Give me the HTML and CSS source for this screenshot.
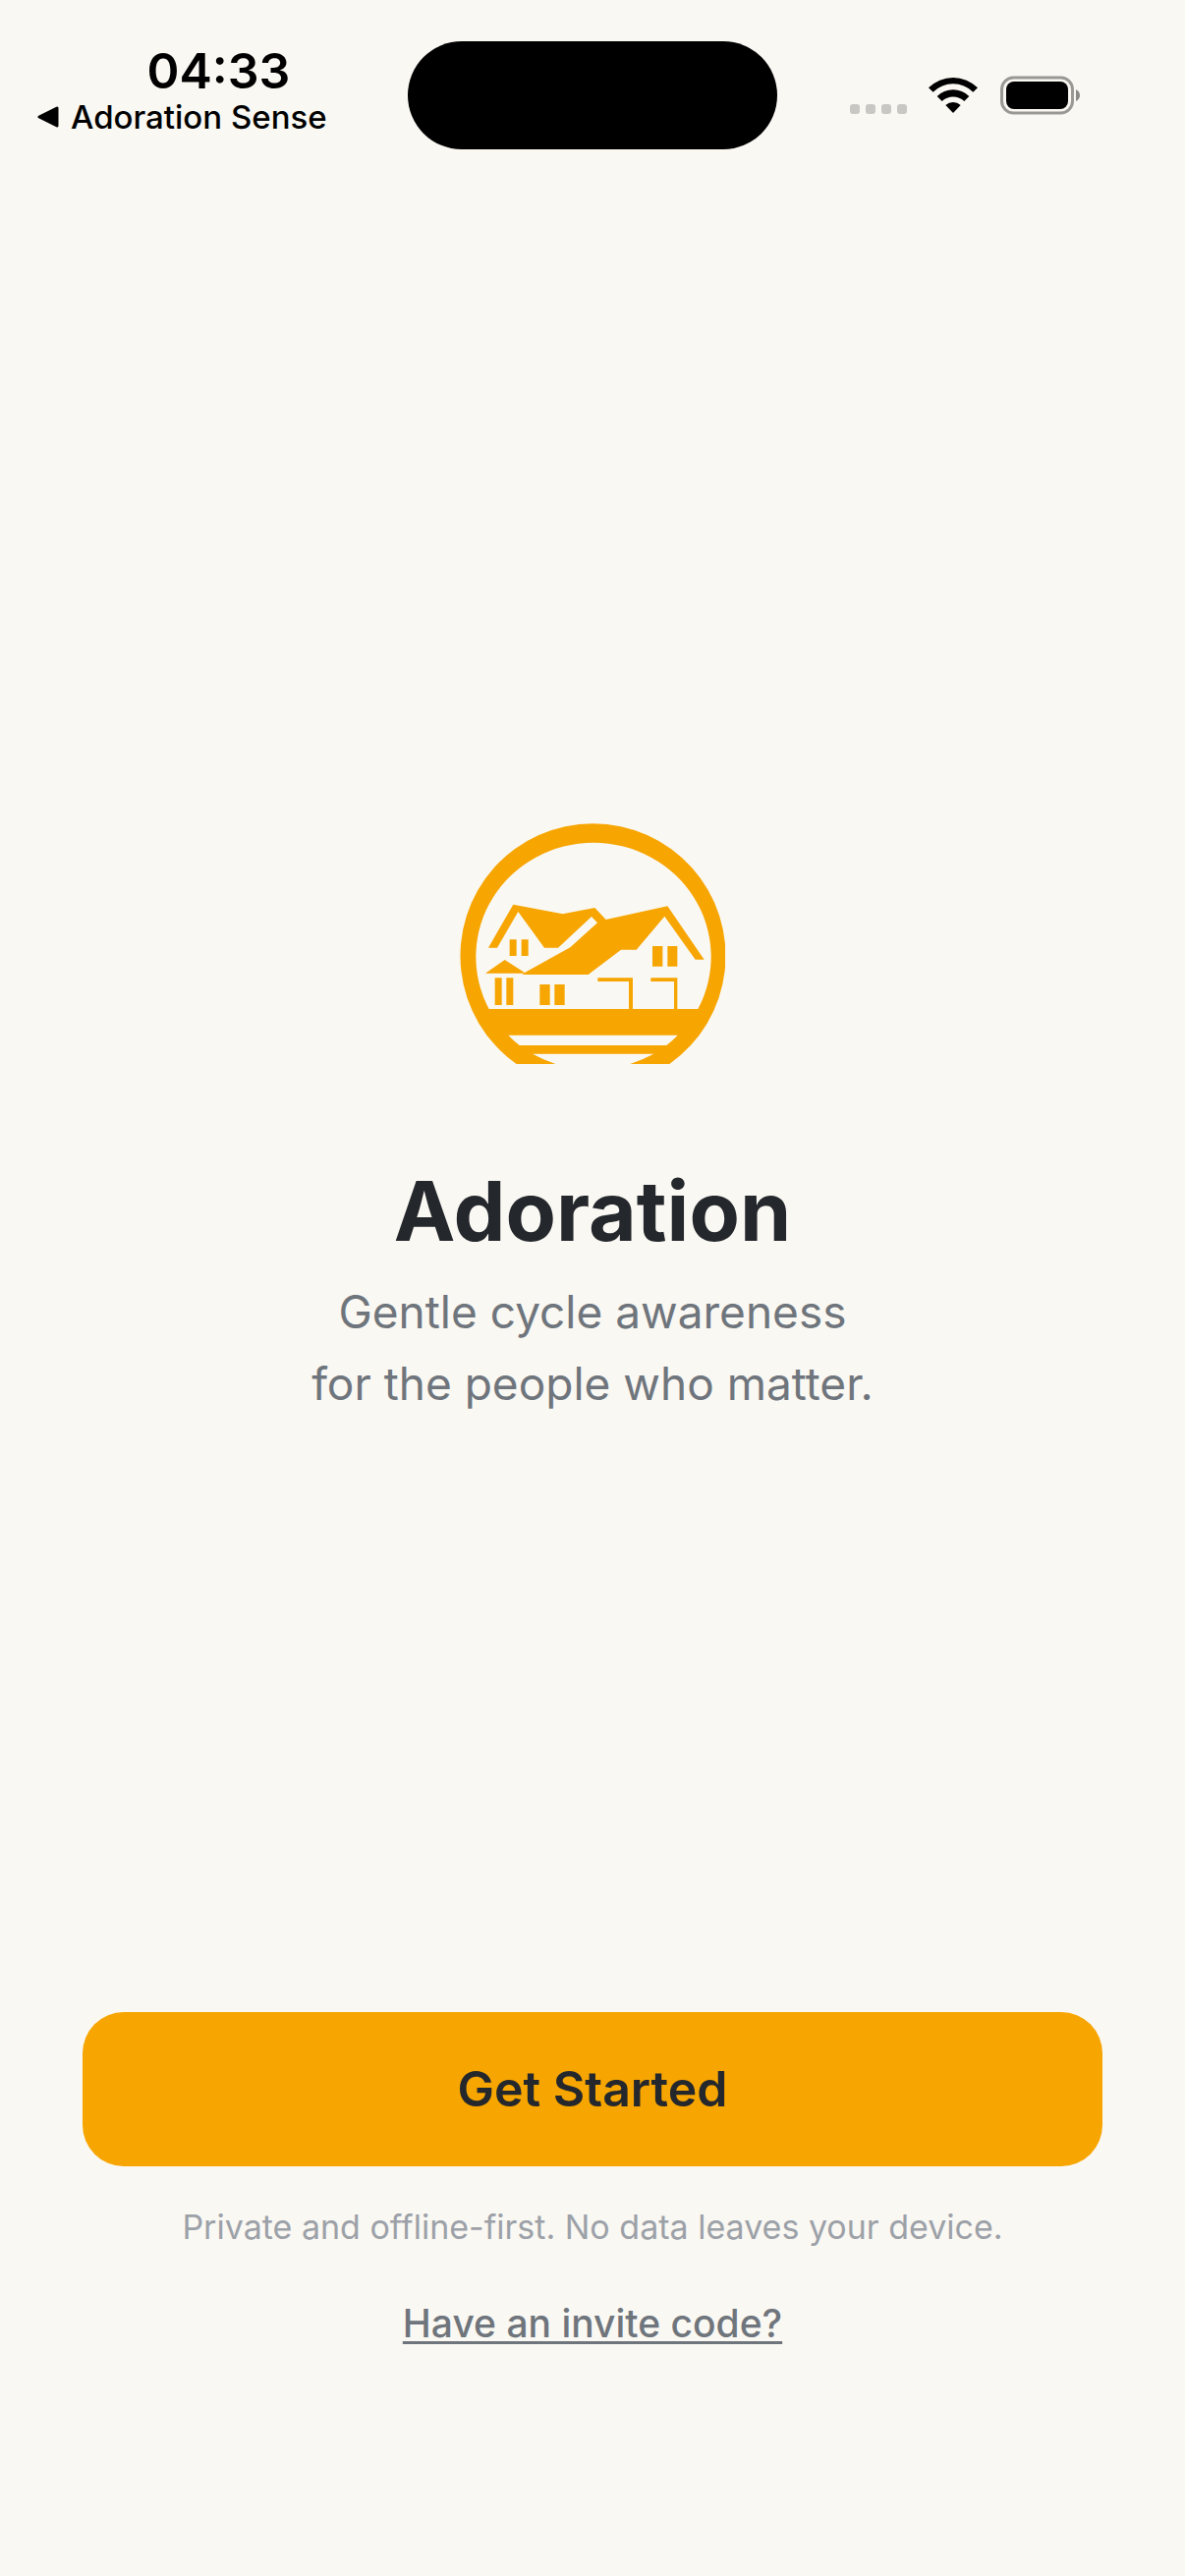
FILE: index.html
```html
<!DOCTYPE html>
<html lang="en">
<head>
    <meta charset="UTF-8">
    <meta name="viewport" content="width=device-width, initial-scale=1.0">
    <title>Adoration</title>
    <link rel="stylesheet" href="styles.css">
</head>
<body>

    <header class="status-bar">
        <div class="status-left">
            <span class="time">04:33</span>
            <a href="#" class="back">
                <svg width="22" height="22" viewBox="0 0 22 22" aria-hidden="true">
                    <path d="M20 2 V20 L2 11 Z" stroke="#000" stroke-width="3" stroke-linejoin="round"/>
                </svg>
                Adoration Sense
            </a>
        </div>
        <div class="island"></div>
        <div class="status-right">
            <svg class="signal" width="58" height="10" viewBox="0 0 58 10" fill="#c8c7c3" aria-hidden="true">
                <rect width="10" height="10" rx="3"/>
                <rect x="16" width="10" height="10" rx="3"/>
                <rect x="32" width="10" height="10" rx="3"/>
                <rect x="48" width="10" height="10" rx="3"/>
            </svg>
            <svg width="50" height="38" viewBox="0 0 150 114" aria-hidden="true">
                <path d="M0 34 A106 106 0 0 1 150 34 L136 47 A87 87 0 0 0 14 47 Z"/>
                <path d="M26 60 A70 70 0 0 1 124 60 L109 75 A49 49 0 0 0 41 75 Z"/>
                <path d="M52 87 A34 34 0 0 1 98 87 L75 111 Z"/>
            </svg>
            <svg width="82" height="40" viewBox="0 0 82 40" aria-hidden="true">
                <rect x="2.5" y="2" width="72" height="36" rx="12" fill="none" stroke="#999894" stroke-width="3"/>
                <rect x="7" y="6" width="63" height="28" rx="8"/>
                <path d="M78 14 Q82 16 82 20 Q82 24 78 26 Z" fill="#8b8a86"/>
            </svg>
        </div>
    </header>

    <main class="welcome">
        <svg class="logo" viewBox="38 36 810 735" fill="#f7a500" role="img" aria-label="Adoration logo">
            <!-- ring, cut flat at the bottom -->
            <path fill-rule="evenodd" d="M211 771 A405 404 0 1 1 678 771 H558 Q596 758 630 740 H260 Q293 758 330 771 Z
                M127 603 H765 A359 348 0 1 0 127 603 Z
                M186 683 Q202 700 220 714 H669 Q687 700 703 683 Z"/>
            <!-- roofs -->
            <path d="M201 284 L352 313 L450 294 L484 330 L672 289 L784 452 H757 L663 320 L577 422 H530 L430 498 H228 L236 492 L375 415 L458 340 L440 321 L338 416 H296 L216 306 L152 416 H125 Z"/>
            <path d="M175 453 L236 492 L230 494 H116 Z"/>
            <!-- windows -->
            <path d="M190 391 h21 v50 h-21 Z M226 391 h21 v50 h-21 Z"/>
            <path d="M145 508 h21 v83 h-21 Z M180 508 h21 v83 h-21 Z"/>
            <path d="M282 528 h31 v63 h-31 Z M327 528 h31 v63 h-31 Z"/>
            <path d="M626 411 h31 v62 h-31 Z M672 411 h30 v62 h-30 Z"/>
            <!-- garage -->
            <path d="M459 508 H566 V604 H554 V519 H459 Z M621 508 H702 V604 H692 V519 H621 Z"/>
        </svg>
        <h1>Adoration</h1>
        <p>Gentle cycle awareness<br>for the people who matter.</p>
    </main>

    <footer class="actions">
        <button type="button" class="start">Get Started</button>
        <p class="note">Private and offline-first. No data leaves your device.</p>
        <a href="#" class="invite">Have an invite code?</a>
    </footer>

</body>
</html>
```
FILE: styles.css
```css
*{
    margin: 0;
    padding: 0;
    box-sizing: border-box;
}

body{
    display: flex;
    flex-direction: column;
    min-height: 100vh;
    background-color: #faf8f3;
    color: #24272c;
    font-family: Inter, "Liberation Sans", sans-serif;
}

/* status bar */
.status-bar{
    display: grid;
    grid-template-columns: 1fr 376px 1fr;
    align-items: start;
    padding-top: 42px;
    color: #000;
}
.status-left{
    display: flex;
    flex-direction: column;
    padding-left: 38px;
}
.time{
    padding-right: 8px;
    text-align: center;
    font-size: 50px;
    line-height: 61px;
    font-weight: 600;
}
.back{
    display: flex;
    align-items: center;
    gap: 12px;
    color: #000;
    font-size: 33px;
    line-height: 32px;
    font-weight: 500;
    text-decoration: none;
    white-space: nowrap;
}
.island{
    height: 110px;
    border-radius: 55px;
    background-color: #000;
}
.status-right{
    display: flex;
    align-items: center;
    gap: 22px;
    height: 110px;
    padding-left: 74px;
}
.signal{
    margin-top: 28px;
}

/* logo and tagline */
.welcome{
    flex: 1;
    display: flex;
    flex-direction: column;
    align-items: center;
    justify-content: center;
    padding-top: 82px;
    text-align: center;
}
.logo{
    width: 270px;
    height: 245px;
    margin-bottom: 100px;
}
h1{
    font-size: 84px;
    line-height: 100px;
    font-weight: 700;
    margin-bottom: 16px;
}
.welcome p{
    color: #6f757c;
    font-size: 46px;
    line-height: 73px;
}

/* bottom actions */
.actions{
    display: flex;
    flex-direction: column;
    align-items: center;
    padding: 0 84px 233px;
}
.start{
    width: 100%;
    padding: 48px;
    border: none;
    border-radius: 42px;
    background-color: #f7a500;
    color: #24272c;
    font-family: inherit;
    font-size: 50px;
    line-height: 61px;
    font-weight: 600;
}
.note{
    margin-top: 42px;
    color: #9ca1a8;
    font-size: 34px;
    line-height: 40px;
    font-weight: 400;
}
.invite{
    margin-top: 54px;
    color: #6f757c;
    font-size: 39px;
    line-height: 48px;
    font-weight: 500;
    text-decoration-thickness: 3px;
    text-decoration-skip-ink: none;
    text-underline-offset: 4px;
}
```
